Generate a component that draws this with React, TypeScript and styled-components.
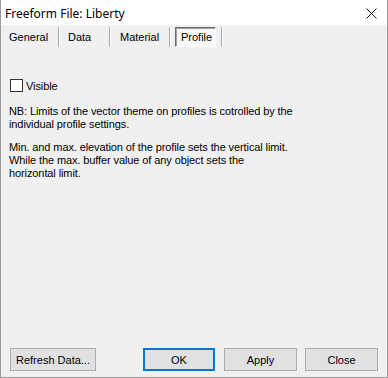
import React, { useState } from "react";
import styled, { createGlobalStyle, css } from "styled-components";

const GlobalStyle = createGlobalStyle`
  html, body {
    margin: 0;
    padding: 0;
    background: #f0f0f0;
  }
  * {
    box-sizing: border-box;
  }
`;

const Window = styled.div`
  width: 388px;
  height: 378px;
  display: flex;
  flex-direction: column;
  background: #f0f0f0;
  border: 1px solid #9a9a9a;
  border-top: none;
  font-family: "Liberation Sans", Arial, sans-serif;
  font-size: 11px;
  color: #000;
`;

const TitleBar = styled.div`
  height: 25px;
  background: #fff;
  display: flex;
  align-items: center;
  justify-content: space-between;
  padding: 0 10px 0 4px;
  font-family: "Noto Sans", "Liberation Sans", sans-serif;
  font-size: 12px;
  flex-shrink: 0;
`;

const TitleText = styled.span`
  margin-top: 1px;
`;

const CloseButton = styled.button`
  width: 12px;
  height: 12px;
  padding: 0;
  border: none;
  background: transparent;
  display: flex;
  align-items: center;
  justify-content: center;
  margin-top: 2px;
`;

const TabStrip = styled.div`
  display: flex;
  height: 20px;
  margin-top: 2px;
`;

const Tab = styled.div<{ $width: number; $pad: number }>`
  width: ${(p) => p.$width}px;
  padding-left: ${(p) => p.$pad}px;
  display: flex;
  align-items: stretch;
  border-right: 1px solid #a8a8a8;
  box-shadow: 1px 0 0 #fff;
  cursor: default;
`;

const TabLabel = styled.span<{ $active?: boolean }>`
  display: flex;
  align-items: center;
  ${(p) =>
    p.$active &&
    css`
      width: 41px;
      padding-left: 5px;
      background: #f8f8f8;
      border: 1px solid #fff;
      border-top-color: #6d6d6d;
      border-left-color: #6d6d6d;
      box-shadow: inset 1px 1px 0 #a0a0a0;
    `}
`;

const Body = styled.div`
  flex: 1;
  padding: 32px 8px 0 8px;
  letter-spacing: -0.1px;
`;

const CheckRow = styled.label`
  display: flex;
  align-items: center;
  gap: 3px;
  margin-left: 1px;
  height: 13px;
`;

const CheckBox = styled.span<{ $checked: boolean }>`
  width: 13px;
  height: 13px;
  border: 1px solid #333;
  background: #fff;
  display: flex;
  align-items: center;
  justify-content: center;
`;

const Note = styled.p`
  margin: 13px 0 0 0;
  line-height: 13px;
`;

const Paragraph = styled.p`
  margin: 10px 0 0 0;
  line-height: 13px;
`;

const Footer = styled.div`
  display: flex;
  align-items: center;
  padding: 0 8px 6px 9px;
  height: 29px;
  flex-shrink: 0;
`;

const Button = styled.button<{ $width: number; $default?: boolean }>`
  width: ${(p) => p.$width}px;
  height: 23px;
  background: #e1e1e1;
  border: 1px solid #adadad;
  font-family: "Liberation Sans", Arial, sans-serif;
  font-size: 11px;
  color: #000;
  padding: 0;
  ${(p) =>
    p.$default &&
    css`
      border: 2px solid #0078d7;
    `}
`;

const Spacer = styled.div<{ $w: number }>`
  width: ${(p) => p.$w}px;
  flex-shrink: 0;
`;

const tabs = [
  { label: "General", width: 58, pad: 8 },
  { label: "Data", width: 51, pad: 9 },
  { label: "Material", width: 60, pad: 10 },
  { label: "Profile", width: 52, pad: 5 },
];

export default function App() {
  const [visible, setVisible] = useState(false);
  return (
    <>
      <GlobalStyle />
      <Window>
        <TitleBar>
          <TitleText>Freeform File: Liberty</TitleText>
          <CloseButton aria-label="Close">
            <svg width="11" height="11" viewBox="0 0 11 11">
              <path d="M0.5 0.5 L10.5 10.5 M10.5 0.5 L0.5 10.5" stroke="#111" strokeWidth="1" />
            </svg>
          </CloseButton>
        </TitleBar>
        <TabStrip>
          {tabs.map((t) => (
            <Tab key={t.label} $width={t.width} $pad={t.pad}>
              <TabLabel $active={t.label === "Profile"}>{t.label}</TabLabel>
            </Tab>
          ))}
        </TabStrip>
        <Body>
          <CheckRow onClick={() => setVisible(!visible)}>
            <CheckBox $checked={visible}>
              {visible && (
                <svg width="9" height="9" viewBox="0 0 9 9">
                  <path d="M1 4.5 L3.5 7 L8 1.5" stroke="#000" strokeWidth="1.4" fill="none" />
                </svg>
              )}
            </CheckBox>
            Visible
          </CheckRow>
          <Note>
            NB: Limits of the vector theme on profiles is cotrolled by the
            <br />
            individual profile settings.
          </Note>
          <Paragraph>
            Min. and max. elevation of the profile sets the vertical limit.
            <br />
            While the max. buffer value of any object sets the
            <br />
            horizontal limit.
          </Paragraph>
        </Body>
        <Footer>
          <Button $width={86}>Refresh Data...</Button>
          <Spacer $w={47} />
          <Button $width={72} $default>
            OK
          </Button>
          <Spacer $w={9} />
          <Button $width={73}>Apply</Button>
          <Spacer $w={8} />
          <Button $width={73}>Close</Button>
        </Footer>
      </Window>
    </>
  );
}
